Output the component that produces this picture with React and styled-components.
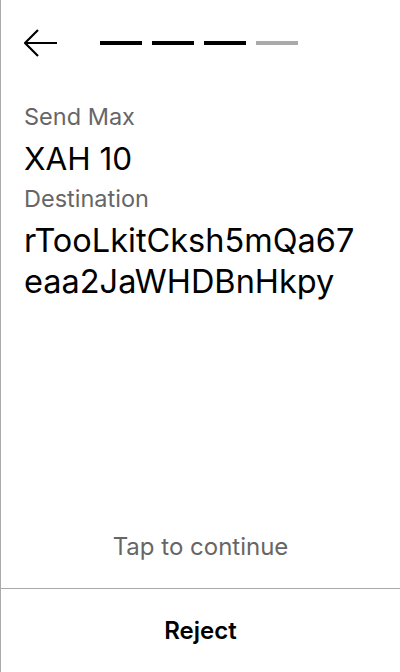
import styled, { createGlobalStyle } from "styled-components";

const GlobalStyle = createGlobalStyle`
  html, body {
    margin: 0;
    padding: 0;
    background: #fff;
  }
  body {
    font-family: Inter, "Noto Sans", sans-serif;
    color: #000;
  }
`;

const Screen = styled.div`
  height: 672px;
  display: flex;
  flex-direction: column;
  border-left: 1px solid #aaaaaa;
  box-sizing: border-box;
`;

const Header = styled.div`
  display: flex;
  align-items: center;
  padding: 29px 24px 0 23px;
  height: 28px;
`;

const BackButton = styled.button`
  border: none;
  background: none;
  padding: 0;
  width: 34px;
  height: 28px;
  display: flex;
  align-items: center;
  cursor: pointer;
`;

const Steps = styled.div`
  display: flex;
  gap: 10px;
  margin-left: 42px;
`;

const Step = styled.div`
  width: 42px;
  height: 4px;
  background: ${(p) => (p.done ? "#000" : "#aaaaaa")};
`;

const Body = styled.div`
  flex: 1;
  display: flex;
  flex-direction: column;
  padding: 44px 30px 0 23px;
`;

const Label = styled.div`
  font-size: 23.5px;
  line-height: 32px;
  color: #666;
`;

const Value = styled.div`
  font-size: ${(p) => (p.address ? "32.5px" : "31.5px")};
  line-height: 41px;
  margin: 5px 0 4px;
  word-break: break-all;
`;

const Hint = styled.div`
  margin: auto -7px 0 0;
  text-align: center;
  font-size: 24px;
  line-height: 32px;
  color: #666;
  padding-bottom: 25px;
`;

const Footer = styled.div`
  height: 83px;
  border-top: 1px solid #aaaaaa;
  display: flex;
  align-items: center;
  justify-content: center;
  font-size: 24px;
  font-weight: 600;
`;

const BackArrow = () => (
  <svg width="34" height="28" viewBox="0 0 34 28" fill="none">
    <path d="M14 1 L1 14 L14 27 M1 14 H33" stroke="#000" strokeWidth="2.2" />
  </svg>
);

export default function App() {
  const steps = [true, true, true, false];
  return (
    <>
      <GlobalStyle />
      <Screen>
        <Header>
          <BackButton>
            <BackArrow />
          </BackButton>
          <Steps>
            {steps.map((done, i) => (
              <Step key={i} done={done} />
            ))}
          </Steps>
        </Header>
        <Body>
          <Label>Send Max</Label>
          <Value>XAH 10</Value>
          <Label>Destination</Label>
          <Value address>rTooLkitCksh5mQa67eaa2JaWHDBnHkpy</Value>
          <Hint>Tap to continue</Hint>
        </Body>
        <Footer>Reject</Footer>
      </Screen>
    </>
  );
}
